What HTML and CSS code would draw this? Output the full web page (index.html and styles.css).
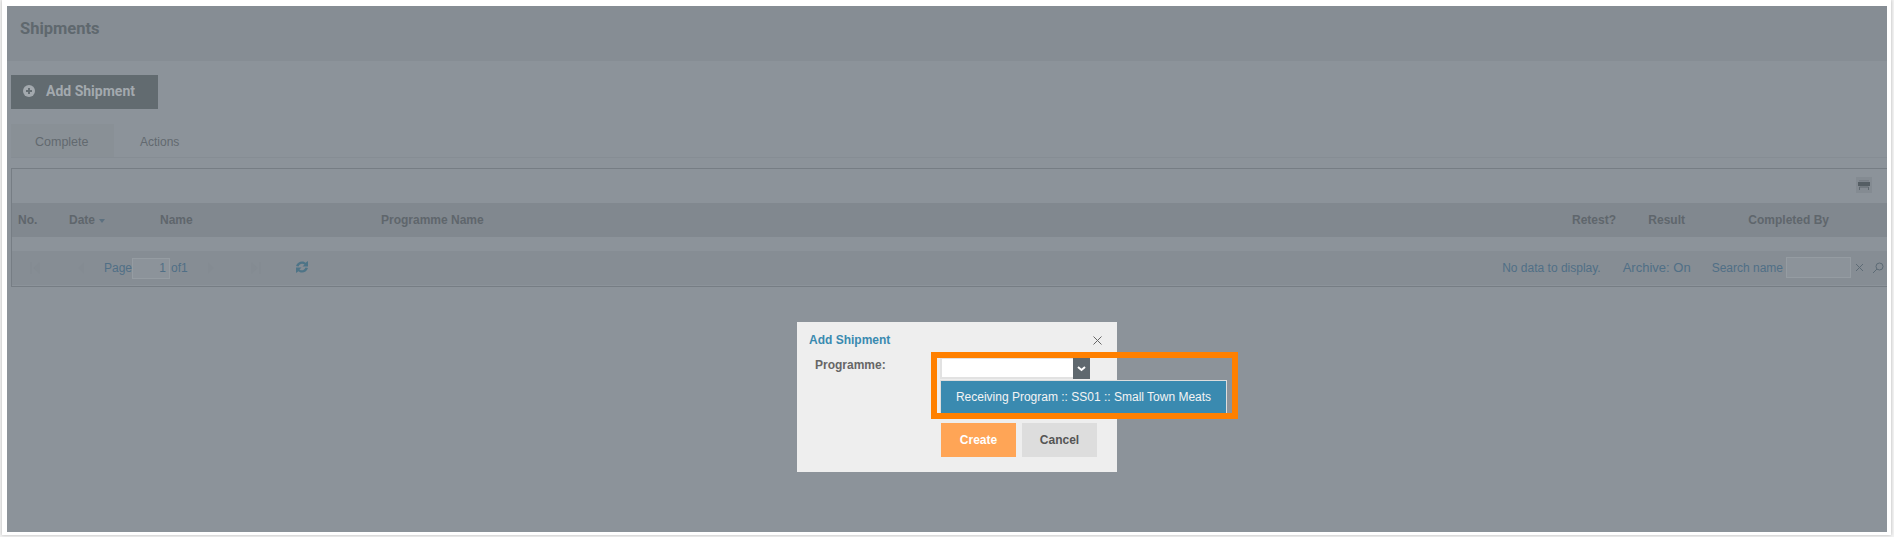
FILE: index.html
```html
<!DOCTYPE html>
<html lang="en">
<head>
<meta charset="utf-8">
<title>Shipments</title>
<link rel="stylesheet" href="styles.css">
</head>
<body>
<div class="frame">
  <main class="app">
    <header class="page-head"><h1>Shipments</h1></header>
    <div class="toolbar">
      <button class="add-btn">
        <svg class="plus" viewBox="0 0 12 12" width="12" height="12"><circle cx="6" cy="6" r="6" fill="#a3a9ae"/><path d="M6 3v6M3 6h6" stroke="#646d72" stroke-width="2"/></svg>
        <span>Add Shipment</span>
      </button>
    </div>
    <nav class="tabs">
      <div class="tab active">Complete</div>
      <div class="tab">Actions</div>
    </nav>
    <section class="grid">
      <div class="grid-tools">
        <svg class="printer" viewBox="0 0 16 16" width="16" height="16"><rect width="16" height="16" fill="#848b92"/><rect x="3" y="3" width="10" height="1.5" fill="#777e85"/><rect x="2" y="5" width="12" height="4" fill="#555e64"/><path d="M3.500 13v-3h9v3" fill="none" stroke="#60696f"/></svg>
      </div>
      <div class="grid-head">
        <span class="col c-no">No.</span>
        <span class="col c-date">Date<i class="caret"></i></span>
        <span class="col c-name">Name</span>
        <span class="col c-prog">Programme Name</span>
        <span class="col c-retest">Retest?</span>
        <span class="col c-result">Result</span>
        <span class="col c-by">Completed By</span>
      </div>
      <div class="grid-empty"></div>
      <div class="pager">
        <svg class="pg first" viewBox="0 0 10 12" width="10" height="12"><path d="M0 0h2v12H0zM10 0v12L3 6z" fill="#848b92"/></svg>
        <svg class="pg prev" viewBox="0 0 6 12" width="6" height="12"><path d="M6 0v12L0 6z" fill="#848b92"/></svg>
        <span class="pg-text page-label">Page</span>
        <span class="pg-input">1</span>
        <span class="pg-text">of1</span>
        <svg class="pg next" viewBox="0 0 6 12" width="6" height="12"><path d="M0 0v12l6-6z" fill="#848b92"/></svg>
        <svg class="pg last" viewBox="0 0 10 12" width="10" height="12"><path d="M10 0H8v12h2zM0 0v12l7-6z" fill="#848b92"/></svg>
        <svg class="refresh" viewBox="0 0 14 14" width="14" height="14"><path d="M1 6C2 3 4.500 1.500 7 1.500 8.500 1.500 9.500 2 10.500 2.800L13 1V6.500H7.500L9.500 4.600C8.800 4 8 3.700 7 3.700 5.500 3.700 4.300 4.600 3.500 6.500ZM13 8C12 11 9.500 12.500 7 12.500 5.500 12.500 4.500 12 3.500 11.200L1 13V7.500H6.500L4.500 9.400C5.200 10 6 10.300 7 10.300 8.500 10.300 9.700 9.400 10.500 7.500Z" fill="#4e7487"/></svg>
        <span class="pager-right">
          <span class="pg-text nodata">No data to display.</span>
          <span class="pg-text archive">Archive: On</span>
          <span class="pg-text">Search name</span>
          <span class="search-input"></span>
          <svg class="s-x" viewBox="0 0 9 9" width="9" height="9"><path d="M1 1l7 7M8 1L1 8" stroke="#5d6b75" fill="none"/></svg>
          <svg class="s-mag" viewBox="0 0 12 12" width="12" height="12"><circle cx="7.500" cy="4.500" r="3.500" stroke="#5d6b75" fill="none"/><path d="M5 7l-4 4" stroke="#5d6b75"/></svg>
        </span>
      </div>
    </section>
  </main>
</div>

<div class="dialog">
  <div class="dlg-title">Add Shipment</div>
  <svg class="dlg-close" viewBox="0 0 9 9" width="9" height="9"><path d="M.5 .5l8 8M8.500 .5l-8 8" stroke="#666" fill="none"/></svg>
  <label class="dlg-label">Programme:</label>
  <div class="combo">
    <div class="combo-input"></div>
    <div class="combo-btn"><svg viewBox="0 0 9 6" width="9" height="6"><path d="M1 1l3.500 3L8 1" stroke="#fff" stroke-width="2" fill="none"/></svg></div>
  </div>
  <div class="option">Receiving Program :: SS01 :: Small Town Meats</div>
  <div class="dlg-actions">
    <button class="btn create">Create</button>
    <button class="btn cancel">Cancel</button>
  </div>
</div>
<div class="highlight"></div>
</body>
</html>
```
FILE: styles.css
```css
* { box-sizing: border-box; }
html, body { margin: 0; height: 100%; }
body {
  position: relative;
  width: 1894px;
  height: 537px;
  overflow: hidden;
  background: #f2f2f2;
  font-family: "Liberation Sans", Arial, sans-serif;
}
.frame {
  margin: 0 3px 2px 2px;
  height: 535px;
  padding: 6px 4px 3px 5px;
  background: #fff;
  box-shadow: 0 0 3px rgba(0,0,0,.25);
}
.app {
  height: 100%;
  background: #8c939a;
  display: flex;
  flex-direction: column;
}
.page-head {
  height: 55px;
  background: #868d94;
  padding: 13px 13px 0;
}
.page-head h1 {
  margin: 0;
  font: 700 16.500px/20px Roboto, sans-serif;
  color: #5f686e;
}
.toolbar { padding: 14px 4px 0; height: 63px; }
.add-btn {
  display: flex;
  align-items: center;
  gap: 11px;
  width: 147px;
  height: 34px;
  padding: 0 12px 2px;
  border: 0;
  background: #626b70;
  color: #a3a9ae;
  font: 700 14px Roboto, sans-serif;
}
.tabs {
  display: flex;
  margin: 0 0 0 4px;
  height: 34px;
  border-bottom: 1px solid #868d94;
}
.tab {
  font-size: 12px;
  line-height: 36px;
  color: #62696f;
  padding: 0 24px;
}
.tab.active { width: 103px; padding: 0 0 0 24px; background: #899096; font-size: 12.500px; }
.tab:not(.active) { padding-left: 26px; }
.grid {
  margin: 10px 0 0 4px;
  border: 1px solid #767d84;
  border-width: 1px 0 1px 1px;
  height: 119px;
}
.grid-tools {
  height: 34px;
  display: flex;
  justify-content: flex-end;
  padding: 8px 15px 0 0;
}
.grid-head {
  position: relative;
  height: 34px;
  background: #81888f;
  font-weight: 700;
  font-size: 12px;
  line-height: 35px;
  color: #5f666c;
}
.col { position: absolute; top: 0; }
.c-no { left: 6px; }
.c-date { left: 57px; }
.c-name { left: 148px; }
.c-prog { left: 369px; }
.c-retest { right: 271px; }
.c-result { right: 202px; }
.c-by { right: 58px; }
.caret {
  display: inline-block;
  margin-left: 4px;
  vertical-align: middle;
  border: 3.500px solid transparent;
  border-top: 4px solid #5d7180;
  border-bottom: 0;
}
.grid-empty { height: 14px; background: #8c939a; }
.pager {
  position: relative;
  height: 34px;
  background: #868d94;
  display: flex;
  align-items: center;
  font-size: 12px;
  color: #506f86;
}
.pg, .refresh { position: absolute; top: 11px; }
.first { left: 18px; }
.prev { left: 66px; }
.page-label { margin-left: 92px; }
.pg-input {
  width: 38px;
  height: 21px;
  margin: 0 1px 0 0;
  padding-right: 3px;
  text-align: right;
  line-height: 19px;
  font-size: 12px;
  background: #8c939a;
  border: 1px solid #959ca2;
}
.next { left: 196px; }
.last { left: 239px; }
.refresh { left: 283px; top: 9px; }
.pager-right {
  position: absolute;
  right: 3px;
  top: 6px;
  display: flex;
  align-items: center;
  height: 21px;
}
.nodata { margin-right: 22px; }
.archive { font-size: 13px; margin-right: 21px; }
.search-input {
  width: 65px;
  height: 21px;
  margin: 0 4px 0 3px;
  background: #8c939a;
  border: 1px solid #959ca2;
}
.s-mag { margin-left: 8px; }
.dialog {
  position: absolute;
  left: 797px;
  top: 322px;
  width: 320px;
  height: 150px;
  background: #eee;
}
.dlg-title {
  position: absolute;
  left: 12px;
  top: 11px;
  font: 700 12px/15px "Liberation Sans", sans-serif;
  color: #3a8ab0;
}
.dlg-close { position: absolute; left: 296px; top: 14px; }
.dlg-label {
  position: absolute;
  left: 18px;
  top: 36px;
  font: 700 12px/15px "Liberation Sans", sans-serif;
  color: #666;
}
.combo { position: absolute; left: 143px; top: 36px; display: flex; height: 21px; }
.combo-input { width: 133px; background: #fff; border: 2px solid #e2e2e2; border-right: 0; border-top-width: 1px; }
.combo-btn {
  width: 17px;
  background: #5f686e;
  display: flex;
  align-items: center;
  justify-content: center;
}
.option {
  position: absolute;
  left: 143px;
  top: 58px;
  width: 287px;
  height: 36px;
  background: #3a8ab0;
  border: 1px solid #ddd;
  color: #f4f4f4;
  font-size: 12px;
  line-height: 32px;
  text-align: center;
}
.dlg-actions {
  position: absolute;
  left: 144px;
  top: 101px;
  display: flex;
  gap: 6px;
}
.btn {
  width: 75px;
  height: 34px;
  border: 0;
  font: 700 12px "Liberation Sans", sans-serif;
}
.create { background: #ffa556; color: #fff; }
.cancel { background: #ddd; color: #555; }
.highlight {
  position: absolute;
  left: 931px;
  top: 352px;
  width: 307px;
  height: 67px;
  border: 6px solid #ff8000;
}
```
